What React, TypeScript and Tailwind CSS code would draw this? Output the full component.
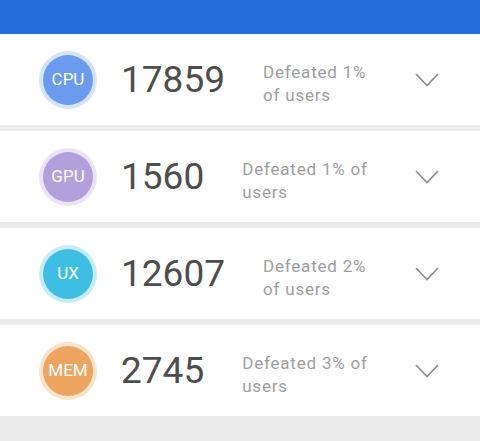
const rows = [
  { label: "CPU", score: "17859", pct: "1%", inner: "bg-[#6a9bef]", ring: "bg-[#d5e3fb]" },
  { label: "GPU", score: "1560", pct: "1%", inner: "bg-[#b2a0dd]", ring: "bg-[#ebe4f6]" },
  { label: "UX", score: "12607", pct: "2%", inner: "bg-[#3fbee3]", ring: "bg-[#c8ecf7]" },
  { label: "MEM", score: "2745", pct: "3%", inner: "bg-[#eca45e]", ring: "bg-[#fbe3cc]" },
];

function Chevron() {
  return (
    <svg width="24" height="14" viewBox="0 0 24 14" fill="none">
      <polyline points="1,1 12,12.5 23,1" stroke="#8c8c8c" strokeWidth="1.7" />
    </svg>
  );
}

function ScoreRow({ row }: { row: (typeof rows)[number] }) {
  return (
    <div className="flex h-[91px] items-center bg-white pl-[39px]">
      {/* badge with pale ring */}
      <div className={`flex h-[58px] w-[58px] shrink-0 items-center justify-center rounded-full ${row.ring}`}>
        <div className={`flex h-[50px] w-[50px] items-center justify-center rounded-full ${row.inner}`}>
          <span className="text-[17px] leading-none text-white">{row.label}</span>
        </div>
      </div>
      <div className="ml-[24px] text-[37px] leading-none text-[#4d4d4d]">{row.score}</div>
      <div className="ml-[38px] mt-[9px] flex-1 text-[17px] leading-[23px] tracking-[0.8px] text-[#9e9e9e]">
        Defeated {row.pct} of users
      </div>
      <div className="ml-[38px] mr-[41px] flex w-[24px] items-center">
        <Chevron />
      </div>
    </div>
  );
}

export default function App() {
  return (
    <div className="min-h-[441px] bg-[#ebebeb] font-['Roboto',sans-serif]">
      <div className="h-[34px] bg-[#266ddd]" />
      <div className="flex flex-col gap-[6px]">
        {rows.map((row) => (
          <ScoreRow key={row.label} row={row} />
        ))}
      </div>
    </div>
  );
}
